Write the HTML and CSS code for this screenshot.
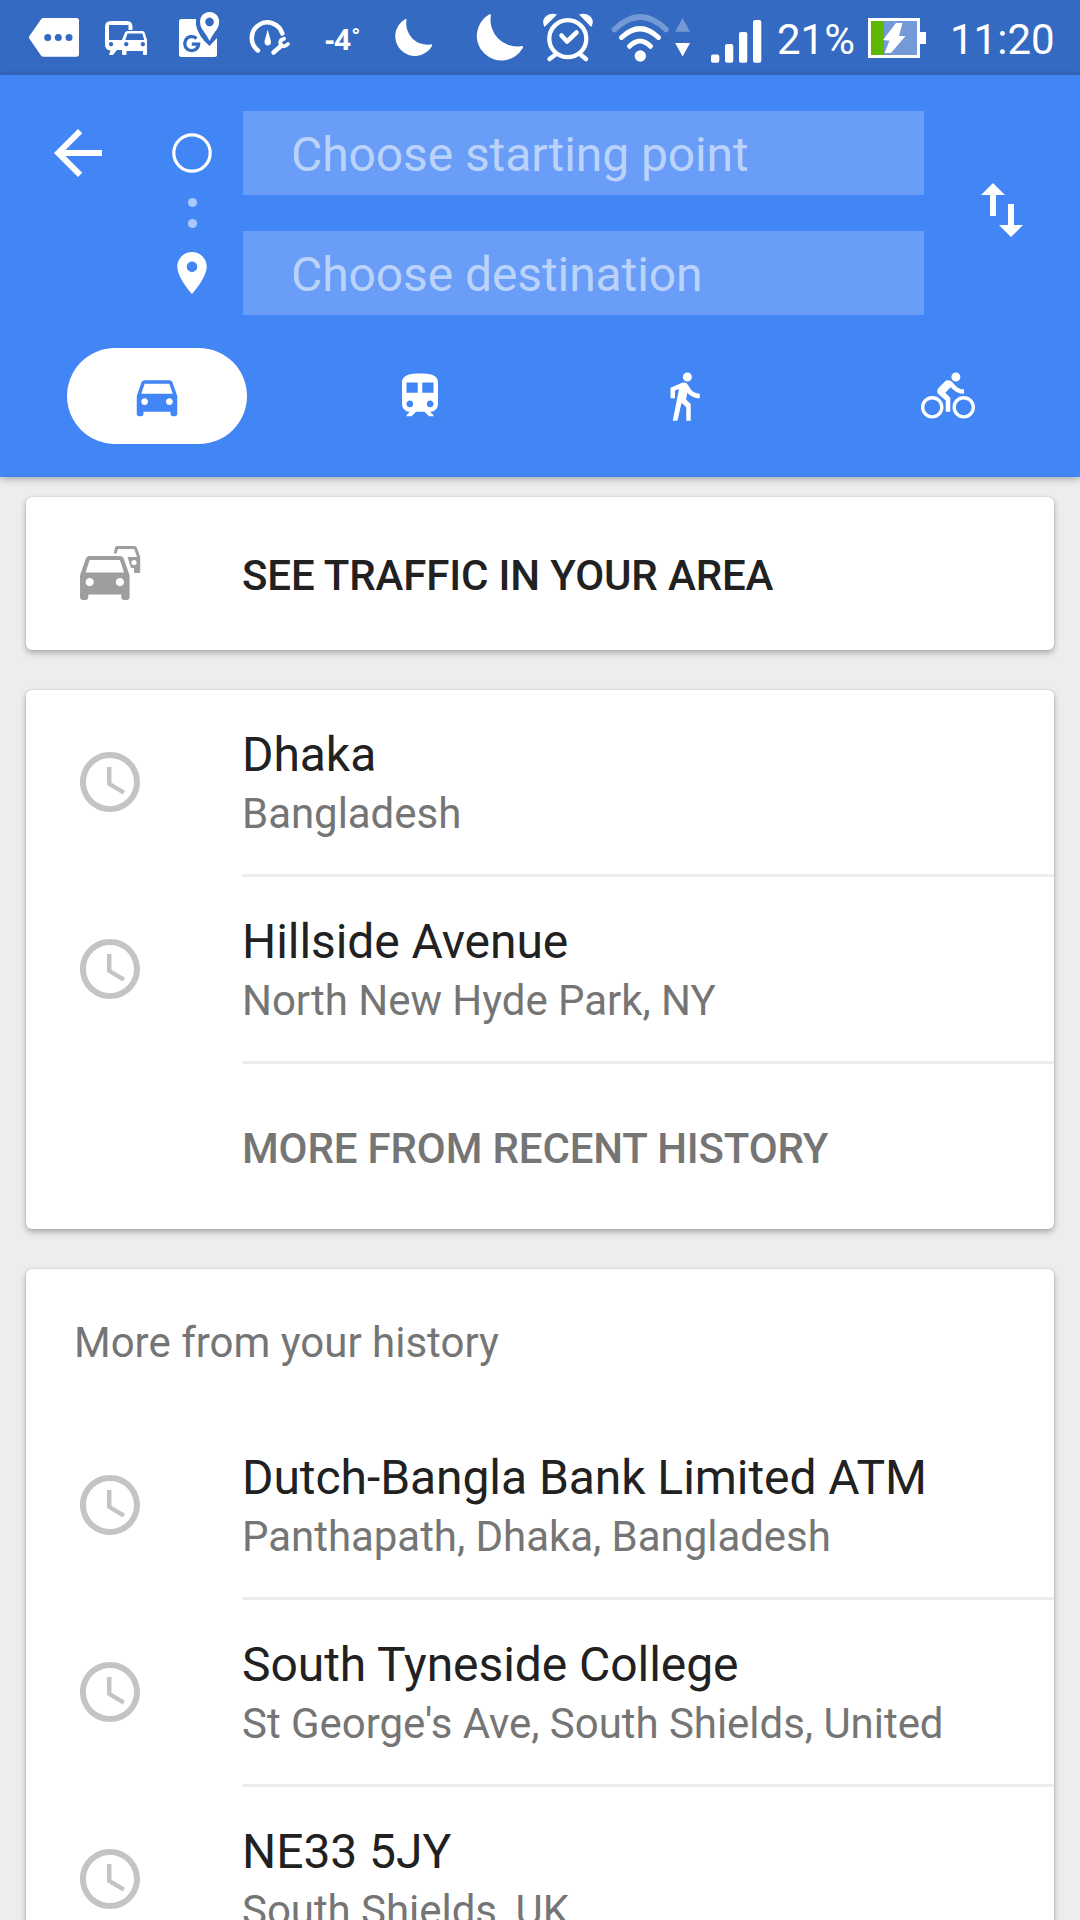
FILE: index.html
```html
<!DOCTYPE html>
<html lang="en">
<head>
<meta charset="utf-8">
<title>Directions</title>
<link rel="stylesheet" href="styles.css">
</head>
<body>
<svg class="defs" width="0" height="0" aria-hidden="true">
  <symbol id="clock" viewBox="0 0 24 24"><path d="M11.99 2C6.47 2 2 6.48 2 12s4.47 10 9.99 10C17.52 22 22 17.52 22 12S17.52 2 11.99 2zM12 20c-4.42 0-8-3.58-8-8s3.58-8 8-8 8 3.58 8 8-3.58 8-8 8z"/><path d="M12.5 7H11v6l5.25 3.15.75-1.23-4.5-2.67z"/></symbol>
  <symbol id="car" viewBox="0 0 24 24"><path d="M18.92 6.01C18.72 5.42 18.16 5 17.5 5h-11c-.66 0-1.21.42-1.42 1.01L3 12v8c0 .55.45 1 1 1h1c.55 0 1-.45 1-1v-1h12v1c0 .55.45 1 1 1h1c.55 0 1-.45 1-1v-8l-2.08-5.99zM6.5 16c-.83 0-1.5-.67-1.5-1.5S5.67 13 6.5 13s1.5.67 1.5 1.5S7.33 16 6.5 16zm11 0c-.83 0-1.5-.67-1.5-1.5s.67-1.5 1.5-1.5 1.5.67 1.5 1.5-.67 1.5-1.5 1.5zM5 11l1.5-4.5h11L19 11H5z"/></symbol>
  <symbol id="moon" viewBox="475 12 50 50"><path d="M490 13.600Q492.500 12.200 491.800 15A26.500 26.500 0 0 0 521.500 45.200Q524.800 44.200 523.800 47A24.600 24.600 0 1 1 490 13.600z"/></symbol>
</svg>

<div class="status">
  <svg width="92" height="75" viewBox="0 0 92 75"><path fill="#fff" d="M43.500 18H76.500Q79 18 79 20.500V54Q79 56.700 76.500 56.700H43.500Q42 56.700 41 55.500L29.300 38.500Q28.700 37.300 29.300 36.200L41 19.300Q42 18 43.500 18z"/><g class="hole"><circle cx="47.700" cy="37.500" r="3.500"/><circle cx="58.300" cy="37.500" r="3.500"/><circle cx="69" cy="37.500" r="3.500"/></g></svg>
  <svg width="72" height="75" viewBox="92 0 72 75"><path fill="#fff" fill-rule="evenodd" d="M111 21H127Q132.500 21 132.500 27V30H128.500V25H109V40H122V50H117L113 55H109L110.500 50.500Q105 50 105 44.500V27Q105 21 111 21zM111 42a2.200 2.200 0 1 0 .1 0z"/><path fill="#fff" fill-rule="evenodd" d="M127.500 31H142.500Q144 31 144.600 32.500L147 40V54Q147 55 146 55H144Q143 55 143 54V51H126.500V54Q126.500 55 125.500 55H123.300Q122 55 122 54V40L125 32.500Q125.800 31 127.500 31zM127.500 33.500L125.300 40H144.300L142.300 33.500zM126.200 42a2.200 2.200 0 1 0 .1 0zM142.800 42a2.200 2.200 0 1 0 .1 0z"/></svg>
  <svg width="70" height="75" viewBox="164 0 70 75"><path fill="#fff" d="M181.500 19H196V25Q198 36 209.500 46L217 38V54.500Q217 57 214.500 57H181.500Q179 57 179 54.500V21.500Q179 19 181.500 19z"/><path class="g-mark" d="M196.500 38.500A7 7 0 1 0 198.700 44.200H191.800"/><path fill="#fff" fill-rule="evenodd" d="M209.600 12C204 12 200 16.400 200 21.800C200 29 206 33 209.600 41C213 33 219.200 29 219.200 21.800C219.200 16.400 215 12 209.600 12zM209.600 17.600a4.300 4.300 0 1 1-.1 0z"/></svg>
  <svg width="72" height="75" viewBox="234 0 72 75"><path class="line" stroke-width="4.500" d="M258 50.500A15.600 15.600 0 1 1 282.300 33.500"/><path fill="#fff" d="M267.700 29.500L271 41.500Q271 45.500 267.700 45.500Q264.500 45.500 264.500 41.500z"/><path class="line" stroke-width="4.500" d="M273.500 52.500L281.500 45.500"/><path class="line" stroke-width="3.800" d="M284 38.800Q279 40 280.500 44.200Q283.500 48.500 288 44"/></svg>
  <div class="temp">-4<span>°</span></div>
  <svg class="moon-small"><use href="#moon"/></svg>
  <svg class="moon-big"><use href="#moon"/></svg>
  <svg width="76" height="75" viewBox="530 0 76 75"><circle class="line" stroke-width="4.300" cx="567.800" cy="38.700" r="18.500"/><path class="line" stroke-width="4.500" d="M561.500 35.500L567 41.500L576.500 32.500M555 55L549.500 59M581 55L586 59"/><path fill="#fff" d="M544.500 27Q541 20 546.500 15.800Q551 12.500 557 14.500zM591.200 27Q595 20 589.500 15.800Q585 12.500 579 14.500z"/></svg>
  <svg width="64" height="75" viewBox="606 0 64 75"><circle fill="#fff" cx="640.300" cy="56" r="5.700"/><path class="line" stroke-width="5" d="M629.500 46.300Q640 35.500 650.500 46.300M621.500 37.500Q640 20 658.500 37.500"/><path class="line faded" stroke-width="5.500" d="M614.500 29.500Q640.300 4.500 666 29.500"/></svg>
  <svg width="34" height="75" viewBox="670 0 34 75"><path class="faint" d="M682.600 18L690 31.700H675.200z"/><path fill="#fff" d="M682.600 56.500L690 43H675.200z"/></svg>
  <svg width="73" height="75" viewBox="704 0 73 75"><g fill="#fff"><rect x="711" y="54.500" width="8.300" height="8.300" rx="2"/><rect x="725" y="44" width="8.300" height="18.800" rx="2"/><rect x="739" y="32" width="8.300" height="30.800" rx="2"/><rect x="753" y="20" width="8.300" height="42.800" rx="2"/></g></svg>
  <div class="status-text battery-level">21%</div>
  <svg width="83" height="75" viewBox="867 0 83 75"><path fill="#fff" d="M868 18H920V32H926V44H920V58H868z"/><path class="faint-solid" d="M884 21H917V55H884z"/><path fill="#5cb800" d="M871 21H884V55H871z"/><path fill="#fff" d="M896 23H902.500L899 36H905.500L891 53H884.500L889.500 40.700L883 40z"/></svg>
  <div class="status-text">11:20</div>
</div>

<header class="header">
  <div class="route">
    <svg class="back" width="72" height="72" viewBox="0 0 24 24"><path d="M20 11H7.830l5.590-5.590L12 4l-8 8 8 8 1.410-1.410L7.830 13H20v-2z"/></svg>
    <svg class="trail" width="50" height="204" viewBox="167 111 50 204">
      <circle cx="192" cy="153" r="18.200" fill="none" stroke="#fff" stroke-width="3.200"/>
      <circle cx="192.500" cy="202.500" r="4.600" opacity=".55"/><circle cx="192.500" cy="223.500" r="4.600" opacity=".55"/>
      <path transform="translate(166.800 247.800) scale(2.100)" d="M12 2C8.130 2 5 5.130 5 9c0 5.250 7 13 7 13s7-7.750 7-13c0-3.870-3.130-7-7-7zm0 9.500c-1.380 0-2.500-1.120-2.500-2.500s1.120-2.500 2.500-2.500 2.500 1.120 2.500 2.500-1.120 2.500-2.500 2.500z"/>
    </svg>
    <div class="fields">
      <div class="field">Choose starting point</div>
      <div class="field">Choose destination</div>
    </div>
    <svg class="swap" width="72" height="72" viewBox="0 0 24 24"><path d="M16 17.010V10h-2v7.010h-3L15 21l4-3.990h-3zM9 3L5 6.990h3V14h2V6.990h3L9 3z"/></svg>
  </div>
  <nav class="modes">
    <div class="mode active"><svg><use href="#car"/></svg></div>
    <div class="mode"><svg viewBox="0 0 24 24"><path d="M12 2c-4 0-8 .5-8 4v9.500C4 17.430 5.570 19 7.500 19L6 20.500v.5h2.230l2-2H14l2 2h2v-.5L16.500 19c1.930 0 3.500-1.570 3.500-3.500V6c0-3.500-3.580-4-8-4zM7.500 17c-.83 0-1.500-.67-1.500-1.500S6.670 14 7.500 14s1.500.67 1.500 1.500S8.330 17 7.500 17zm3.500-6.500H6V6h5v4.500zm2 0V6h5v4.500h-5zm3.500 6.500c-.83 0-1.500-.67-1.500-1.500s.67-1.500 1.500-1.500 1.500.67 1.500 1.500-.67 1.500-1.500 1.500z"/></svg></div>
    <div class="mode"><svg viewBox="0 0 24 24"><path d="M13.500 5.500c1.100 0 2-.9 2-2s-.9-2-2-2-2 .9-2 2 .9 2 2 2zM9.800 8.900L7 23h2.100l1.800-8 2.100 2v6h2v-7.500l-2.100-2 .6-3C14.800 12 16.800 13 19 13v-2c-1.900 0-3.500-1-4.300-2.400l-1-1.600c-.4-.6-1-1-1.700-1-.3 0-.5.1-.8.1L6 8.300V13h2V9.600l1.800-.7"/></svg></div>
    <div class="mode"><svg viewBox="0 0 24 24"><path d="M15.500 5.500c1.100 0 2-.9 2-2s-.9-2-2-2-2 .9-2 2 .9 2 2 2zM5 12c-2.800 0-5 2.200-5 5s2.200 5 5 5 5-2.200 5-5-2.200-5-5-5zm0 8.500c-1.900 0-3.500-1.600-3.500-3.500s1.600-3.500 3.500-3.500 3.500 1.600 3.500 3.500-1.600 3.500-3.500 3.500zm5.800-10l2.400-2.400.8.8c1.300 1.300 3 2.100 5.100 2.100V9c-1.500 0-2.700-.6-3.600-1.500l-1.900-1.900c-.5-.4-1-.6-1.600-.6s-1.100.2-1.400.6L7.800 8.400c-.4.4-.6.9-.6 1.400 0 .6.2 1.100.6 1.400L11 14v5h2v-6.200l-2.200-2.300zM19 12c-2.800 0-5 2.200-5 5s2.200 5 5 5 5-2.200 5-5-2.200-5-5-5zm0 8.500c-1.900 0-3.500-1.600-3.500-3.500s1.600-3.500 3.500-3.500 3.500 1.600 3.500 3.500-1.600 3.500-3.500 3.500z"/></svg></div>
  </nav>
</header>

<main class="content">
  <section class="card traffic">
    <svg class="traffic-icon" width="62" height="56" viewBox="79 545 62 56">
      <path d="M116.500 546H134.500Q136.300 546 137 548L140.200 557V572Q140.200 573 139 573H135Q134 573 134 572V568H131L127.500 557H137L134.300 549H118L116.500 553.500H113.800L115 547.500Q115.400 546 116.500 546z"/>
      <circle cx="134" cy="562.500" r="2.600" fill="#fff"/>
      <use href="#car" width="66" height="66" x="71.800" y="542.200"/>
    </svg>
    <div class="action">SEE TRAFFIC IN YOUR AREA</div>
  </section>

  <section class="card">
    <div class="row"><svg class="clock"><use href="#clock"/></svg><div class="place"><div class="name">Dhaka</div><div class="area">Bangladesh</div></div></div>
    <div class="row"><svg class="clock"><use href="#clock"/></svg><div class="place"><div class="name">Hillside Avenue</div><div class="area">North New Hyde Park, NY</div></div></div>
    <div class="more">MORE FROM RECENT HISTORY</div>
  </section>

  <section class="card">
    <div class="heading">More from your history</div>
    <div class="row"><svg class="clock"><use href="#clock"/></svg><div class="place"><div class="name">Dutch-Bangla Bank Limited ATM</div><div class="area">Panthapath, Dhaka, Bangladesh</div></div></div>
    <div class="row"><svg class="clock"><use href="#clock"/></svg><div class="place"><div class="name">South Tyneside College</div><div class="area">St George's Ave, South Shields, United</div></div></div>
    <div class="row"><svg class="clock"><use href="#clock"/></svg><div class="place"><div class="name">NE33 5JY</div><div class="area">South Shields, UK</div></div></div>
  </section>
</main>
</body>
</html>
```
FILE: styles.css
```css
* { box-sizing: border-box; }

body {
  margin: 0;
  width: 1080px;
  height: 1920px;
  overflow: hidden;
  display: flex;
  flex-direction: column;
  background: #ededed;
  font-family: Roboto, "Liberation Sans", sans-serif;
}

svg { display: block; flex: none; }
.defs { position: absolute; }

/* Status bar */
.status {
  flex: none;
  display: flex;
  align-items: center;
  height: 75px;
  background: #346ac1;
  color: #fff;
}
.hole { fill: #346ac1; }
.line { fill: none; stroke: #fff; stroke-linecap: round; stroke-linejoin: round; }
.faded { stroke: #7399d6; }
.faint, .faint-solid { fill: #7399d6; }
.g-mark { fill: none; stroke: #346ac1; stroke-width: 3.2; }
.temp {
  display: flex;
  width: 88px;
  padding: 3px 0 0 19px;
  font: 700 29px/40px "Noto Sans", sans-serif;
}
.temp span { font-size: 18px; line-height: 31px; padding-left: 1px; }
.moon-small { width: 40px; height: 40px; margin-left: -1px; fill: #fff; }
.moon-big { width: 50px; height: 50px; margin: 0 6px 0 41px; fill: #fff; }
.status-text { font-size: 42px; line-height: 49px; padding-top: 4px; }
.battery-level { width: 90px; }

/* Route header */
.header {
  position: relative;
  flex: none;
  height: 402px;
  padding-top: 36px;
  background: #4285f5;
  box-shadow: 0 2px 7px rgba(0, 0, 0, .3);
}
.route { display: flex; height: 204px; fill: #fff; }
.back { margin: 6px 53px 0 42px; }
.fields { display: flex; flex-direction: column; gap: 36px; width: 681px; margin-left: 26px; }
.field {
  height: 84px;
  padding: 2px 0 0 48px;
  background: #699df7;
  color: #bbd3fb;
  font-size: 48px;
  line-height: 84px;
  letter-spacing: -.09px;
}
.swap { margin: 63px 0 0 42px; }
.modes {
  display: grid;
  grid-template-columns: repeat(4, 180px);
  column-gap: 83.5px;
  padding: 33px 0 0 67px;
}
.mode {
  display: flex;
  align-items: center;
  justify-content: center;
  height: 96px;
  border-radius: 48px;
  fill: #fff;
}
.mode svg { width: 54px; height: 54px; }
.mode:nth-child(2) { padding-right: 1px; }
.active { background: #fff; fill: #4285f5; }

/* Cards */
.content {
  flex: none;
  display: flex;
  flex-direction: column;
  gap: 40px;
  padding: 20px 26px 0;
}
.card {
  border-radius: 6px;
  background: #fff;
  box-shadow: 0 3px 6px rgba(0, 0, 0, .28), 0 0 2px rgba(0, 0, 0, .16);
}
.traffic { display: flex; align-items: center; height: 153px; }
.traffic-icon { margin: -2px 101px 0 53px; fill: #9e9e9e; }
.action, .more { font-size: 42px; font-weight: 500; letter-spacing: -.14px; }
.action { padding-top: 4px; color: #212121; }
.row { display: flex; align-items: center; height: 187px; }
.clock { width: 72px; height: 72px; margin: -3px 96px 0 48px; fill: #c4c4c4; }
.place { flex: 1; height: 187px; padding-top: 35px; border-bottom: 3px solid #ededed; }
.name { color: #212121; font-size: 48px; line-height: 60px; letter-spacing: -.06px; }
.area { color: #757575; font-size: 42px; line-height: 57px; letter-spacing: -.04px; }
.more { height: 165px; padding: 2px 0 0 216px; color: #757575; line-height: 165px; }
.heading { height: 144px; padding: 2px 0 0 48px; color: #757575; font-size: 42px; line-height: 144px; }
```
